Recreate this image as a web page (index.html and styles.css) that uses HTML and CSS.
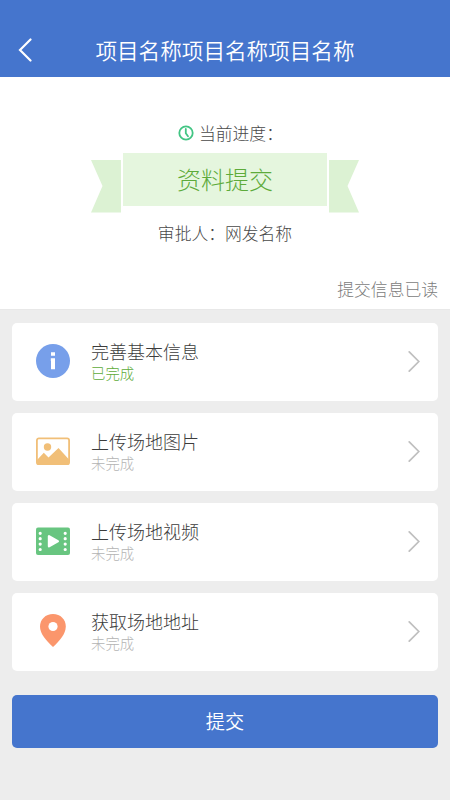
FILE: index.html
```html
<!DOCTYPE html>
<html lang="zh-CN">
<head>
<meta charset="utf-8">
<meta name="viewport" content="width=device-width, initial-scale=1">
<title>项目名称</title>
<link rel="stylesheet" href="styles.css">
</head>
<body>
<header class="header">
  <svg class="back" viewBox="0 0 14 24"><path d="M12.500 1.500 2 12l10.500 10.500"/></svg>
  <h1 class="title">项目名称项目名称项目名称</h1>
</header>
<section class="progress">
  <div class="current">
    <svg class="clock" viewBox="0 0 16 16"><circle cx="8" cy="8" r="6.700"/><path d="M7.800 4v4.300l2.200 2.900"/></svg>
    <span>当前进度：</span>
  </div>
  <div class="ribbon">
    <svg class="tail" viewBox="0 0 30 53"><path d="M0 0h30v52.500H0l11.500-26.500z"/></svg>
    <div class="stage">资料提交</div>
    <svg class="tail" viewBox="0 0 30 53"><path d="M30 0H0v52.500h30L18.500 26z"/></svg>
  </div>
  <div class="approver">审批人：网发名称</div>
  <div class="read">提交信息已读</div>
</section>
<main class="list">
  <a class="card">
    <svg class="icon" viewBox="0 0 34 34"><circle cx="17" cy="17" r="17" fill="#779fea"/><path d="M15 8.300h4v3.500h-4zM14.800 14.300H19v11h-4V17h-.2z" fill="#fff"/></svg>
    <div class="text"><div class="name">完善基本信息</div><div class="status done">已完成</div></div>
    <svg class="arrow" viewBox="0 0 12 22"><path d="m1 1 10 10L1 21"/></svg>
  </a>
  <a class="card">
    <svg class="icon" viewBox="0 0 34 34"><rect x=".9" y="4.400" width="32.200" height="25.800" rx="2" fill="#fff" stroke="#f1bf78" stroke-width="1.800"/><circle cx="11.500" cy="13" r="3.700" fill="#f1bf78"/><path d="M1 26l6.800-7.200 4.700 4.700 10-9.500L33 25.500V29q0 1.500-1.500 1.500h-29Q1 30.500 1 29z" fill="#f1bf78"/></svg>
    <div class="text"><div class="name">上传场地图片</div><div class="status">未完成</div></div>
    <svg class="arrow" viewBox="0 0 12 22"><path d="m1 1 10 10L1 21"/></svg>
  </a>
  <a class="card">
    <svg class="icon" viewBox="0 0 34 34"><rect y="3.500" width="34" height="27.500" rx="2" fill="#68c580"/><path d="M13 12.300v10l8.800-5z" fill="#fff" stroke="#fff" stroke-width="2.400" stroke-linejoin="round"/><path d="M4.200 9.300v17M29.200 9.300v17" fill="none" stroke="#fff" stroke-width="3.200" stroke-linecap="round" stroke-dasharray="0 5.400"/></svg>
    <div class="text"><div class="name">上传场地视频</div><div class="status">未完成</div></div>
    <svg class="arrow" viewBox="0 0 12 22"><path d="m1 1 10 10L1 21"/></svg>
  </a>
  <a class="card">
    <svg class="icon" viewBox="0 0 34 34"><path d="M17 0C9.500 0 4 5.500 4 12.500 4 20 10.500 27 17 33c6.500-6 12.800-13 12.800-20.500C29.800 5.500 24.500 0 17 0z" fill="#fb966c"/><circle cx="17" cy="12.500" r="4.600" fill="#fff"/></svg>
    <div class="text"><div class="name">获取场地地址</div><div class="status">未完成</div></div>
    <svg class="arrow" viewBox="0 0 12 22"><path d="m1 1 10 10L1 21"/></svg>
  </a>
  <button class="submit">提交</button>
</main>
</body>
</html>
```
FILE: styles.css
```css
* { box-sizing: border-box; }
body {
  margin: 0;
  min-height: 800px;
  background: #ededed;
  color: #484848;
  font-family: "Noto Sans CJK SC", sans-serif;
  font-weight: 300;
}
svg { display: block; flex: none; }
.header {
  display: grid;
  grid-template-columns: 40px 1fr 40px;
  align-items: center;
  height: 76.5px;
  padding: 23px 0 0;
  background: #4575cd;
  color: #fff;
}
.back { width: 14px; height: 24px; margin-left: 18px; fill: none; stroke: #fff; stroke-width: 2.2; stroke-linecap: round; }
.title { margin: 0; font-size: 21.6px; line-height: 32px; font-weight: 350; text-align: center; white-space: nowrap; }
.progress { height: 233px; padding-top: 43px; background: #fff; border-bottom: 1px solid #e8e8e8; }
.current { display: flex; align-items: center; height: 26px; padding-left: 178px; gap: 5px; font-size: 16.8px; }
.clock { width: 16px; height: 16px; fill: none; stroke: #43c584; stroke-width: 1.8; stroke-linecap: round; }
.ribbon { display: flex; justify-content: center; gap: 2px; margin-top: 7.5px; }
.tail { width: 30px; height: 53px; margin-top: 6.5px; fill: #dcf2d3; }
.stage { width: 204px; height: 53px; background: #e5f6de; color: #5dab3a; font-size: 24px; line-height: 52px; text-align: center; }
.approver { margin-top: 8px; font-size: 16.8px; line-height: 25px; text-align: center; }
.read { margin-top: 31px; padding-right: 12px; color: #7c7c7c; font-size: 16.8px; line-height: 25px; text-align: right; }
.list { display: flex; flex-direction: column; gap: 12px; padding: 13px 12px 0; }
.card { display: flex; align-items: center; height: 78px; padding: 0 18px 0 24px; border-radius: 5px; background: #fff; }
.icon { width: 34px; height: 34px; margin-bottom: 1px; }
.text { flex: 1; margin-left: 21px; padding-bottom: 1px; }
.name { color: #3c3c3c; font-size: 18px; line-height: 22px; }
.status { color: #b4b4b4; font-size: 14.4px; line-height: 21px; }
.status.done { color: #5dab3a; }
.arrow { width: 12px; height: 21px; margin-bottom: 1px; fill: none; stroke: #bfbfbf; stroke-width: 1.8; stroke-linecap: round; }
.submit { height: 53px; margin-top: 12px; padding: 0 0 1px; border: 0; border-radius: 5px; background: #4575cd; color: #fff; font: inherit; font-weight: 350; font-size: 19.2px; }
```
